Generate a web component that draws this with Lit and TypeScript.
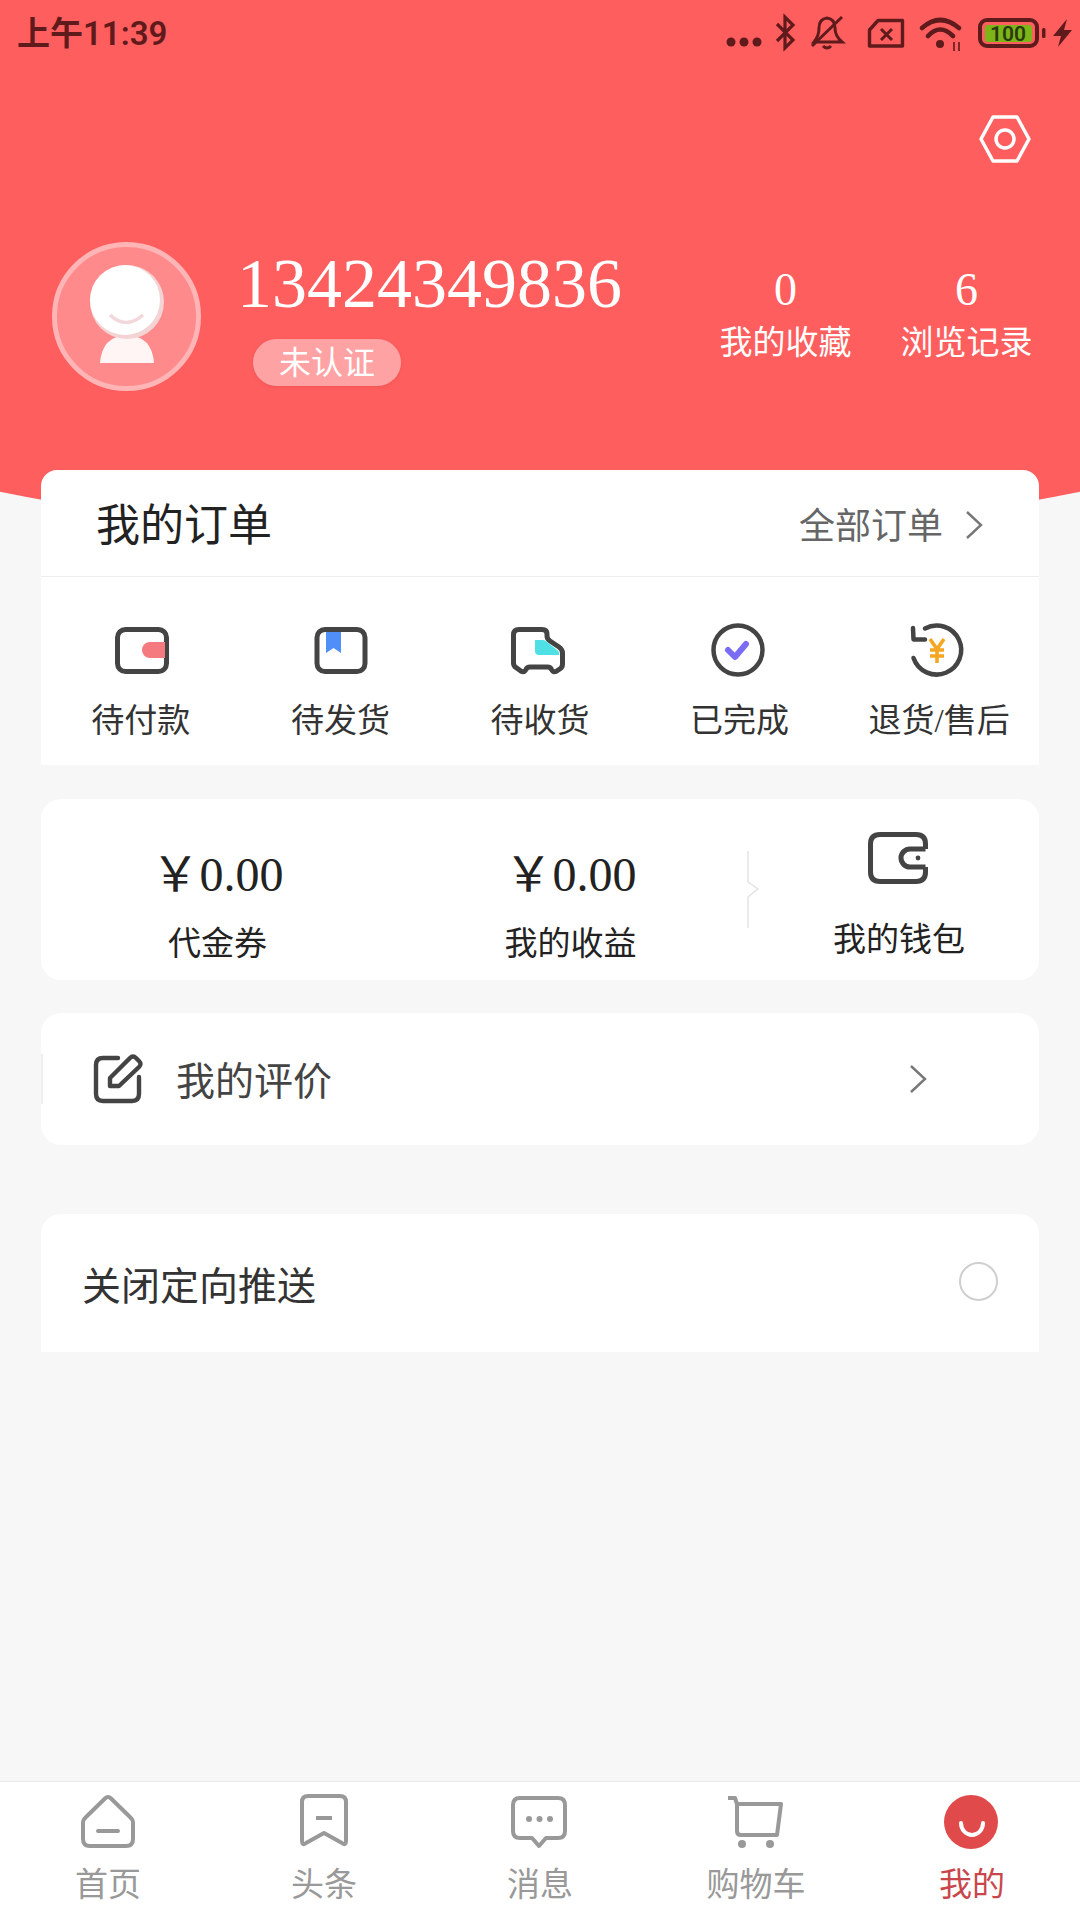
import { LitElement, html, css, svg } from "lit";
import { customElement } from "lit/decorators.js";

const chevron = (w: number, h: number, color: string) => html`<svg width=${w} height=${h} viewBox="0 0 18 30" fill="none" stroke=${color} stroke-width="2.4"><path d="M2 2 L16 15 L2 28" /></svg>`;

const orderIcons = [
  { label: "待付款", icon: svg`<rect x="6.5" y="9.5" width="49" height="42" rx="8" fill="none" stroke="#444" stroke-width="5"/><path d="M54 22 H39 A8 8 0 0 0 39 38 H54 Z" fill="#f47a7f"/>` },
  { label: "待发货", icon: svg`<path d="M16 10 H31 V33 L23.5 28 L16 33 Z" fill="#4f8ff7"/><rect x="7" y="9.5" width="48" height="42" rx="8" fill="none" stroke="#444" stroke-width="5"/>` },
  { label: "待收货", icon: svg`<path d="M9 9.5 H32 Q37 9.5 37 14 V16 Q37 19 40 21 L49 27 Q52.5 29.5 52.5 33 V44 Q52.5 47 50.5 48.5 L46 51.5 Q43 52.5 41.5 49.5 Q40.5 47 37.5 47 H20 Q17 47 16 49.5 Q14.5 52.5 11.5 51.5 L6 47.5 Q3.5 46 3.5 43 V15 Q3.5 9.5 9 9.5 Z" fill="none" stroke="#444" stroke-width="5" stroke-linejoin="round"/><path d="M25 20 H33 Q35 20 37 22 L47 30 Q49 31 49 33 V35 H29 Q25 35 25 31 Z" fill="#4fe0e6"/>` },
  { label: "已完成", icon: svg`<circle cx="28" cy="30" r="24.5" fill="none" stroke="#444" stroke-width="4.5"/><path d="M18 30 L25 37 L36 24" fill="none" stroke="#7b6cf5" stroke-width="6" stroke-linecap="round" stroke-linejoin="round"/>` },
  { label: "退货/售后", icon: svg`<path d="M16 8.5 A24.5 24.5 0 1 1 4.5 38" fill="none" stroke="#444" stroke-width="4.5" stroke-linecap="round"/><path d="M4 8 L4.5 19.5 L16 19.5" fill="none" stroke="#444" stroke-width="4.5" stroke-linecap="round" stroke-linejoin="round"/><path d="M21 19 L28 29 L35 19 M28 29 V43 M21 30 H35 M21 36 H35" fill="none" stroke="#f5a623" stroke-width="3.6"/>` },
];

const navItems = [
  { label: "首页", icon: svg`<path d="M27 6.5 Q30 3.5 33 6.5 L52 25 Q55 27.5 55 31 V47 Q55 54 48 54 H12 Q5 54 5 47 V31 Q5 27.5 8 25 Z M20 39 H40" fill="none" stroke="#999" stroke-width="4" stroke-linejoin="round" stroke-linecap="round"/>` },
  { label: "头条", icon: svg`<path d="M14 4 H46 Q52 4 52 10 V49 Q52 54 48 51 L30 41 L12 51 Q8 54 8 49 V10 Q8 4 14 4 Z M22 26 H38" fill="none" stroke="#999" stroke-width="4" stroke-linejoin="round"/>` },
  { label: "消息", icon: svg`<path d="M10 6 H48 Q55 6 55 13 V39 Q55 46 48 46 H36 L29 54 L22 46 H10 Q3 46 3 39 V13 Q3 6 10 6 Z" fill="none" stroke="#999" stroke-width="4" stroke-linejoin="round"/><circle cx="19" cy="27" r="3" fill="#999"/><circle cx="29.5" cy="27" r="3" fill="#999"/><circle cx="40" cy="27" r="3" fill="#999"/>` },
  { label: "购物车", icon: svg`<path d="M2 6 H9 L11 12 V39 Q11 43 15 43 H51 L55 12 H11" fill="none" stroke="#999" stroke-width="4" stroke-linejoin="round"/><circle cx="16" cy="52" r="4" fill="#999"/><circle cx="44" cy="52" r="4" fill="#999"/>` },
  { label: "我的", active: true, icon: svg`<circle cx="29" cy="30" r="27" fill="#e14a4a"/><path d="M19 31 A11 12 0 0 0 41 31" fill="none" stroke="#fff" stroke-width="4" stroke-linecap="round"/>` },
];

@customElement("app-root")
export class AppRoot extends LitElement {
  static styles = css`
    :host {
      display: flex;
      flex-direction: column;
      width: 1080px;
      height: 1920px;
      background: #f7f7f7;
      overflow: hidden;
      font-family: "Liberation Serif", "Noto Sans CJK SC", serif;
    }
    svg { display: block; flex: none; }
    .header {
      height: 544px;
      background: #ff5e5e;
      clip-path: ellipse(1262px 544px at 540px 0);
      display: flex;
      flex-direction: column;
      color: #fff;
    }
    .status {
      height: 66px;
      display: flex;
      align-items: center;
      justify-content: space-between;
      padding-left: 17px;
      color: #5f1a1c;
      font: 600 33px/66px Roboto, "Noto Sans CJK SC", sans-serif;
    }
    .status span { padding-top: 2px; }
    .settings { display: flex; justify-content: flex-end; padding-right: 49px; margin-top: 48px; }
    .profile { display: flex; margin-top: 78px; padding: 0 23px 0 52px; }
    .info { margin-left: 36px; }
    .phone { font-size: 70px; line-height: 84px; }
    .badge {
      margin: 13px 0 0 16px;
      width: 148px;
      height: 47px;
      border-radius: 24px;
      background: #ffa2a4;
      box-shadow: 0 1px 3px rgba(200, 60, 60, 0.3);
      font-size: 32px;
      line-height: 49px;
      text-align: center;
    }
    .stats { margin-left: auto; display: flex; padding-top: 18px; }
    .stat { width: 181px; text-align: center; }
    .stat b { display: block; font-weight: 400; font-size: 46px; line-height: 59px; }
    .stat span { display: block; font-size: 33px; line-height: 48px; }
    .content { flex: 1; margin: -74px 41px 0; display: flex; flex-direction: column; position: relative; }
    .card { background: #fff; border-radius: 20px; }
    .order { height: 295px; border-radius: 16px 16px 0 0; }
    .order-head {
      height: 106px;
      border-bottom: 1px solid #eeeeee;
      display: flex;
      align-items: center;
      padding: 0 56px 0 55px;
      color: #222;
      font-size: 44px;
    }
    .order-head > span { margin-top: -2px; }
    .all { margin-left: auto; display: flex; align-items: center; gap: 22px; color: #666; font-size: 36px; }
    .all svg { margin-top: 3px; }
    .order-grid { display: grid; grid-template-columns: repeat(5, 1fr); padding-top: 43px; }
    .order-item { display: flex; flex-direction: column; align-items: center; }
    .order-item span { margin-top: 17px; font-size: 33px; line-height: 48px; color: #333; white-space: nowrap; }
    .wallet { height: 181px; margin-top: 34px; display: flex; }
    .money { width: 353px; padding-top: 46px; text-align: center; box-sizing: border-box; color: #222; }
    .money b { display: block; font-weight: 400; font-size: 48px; line-height: 60px; }
    .money span { display: block; margin-top: 15px; font-size: 33px; line-height: 48px; }
    .wallet-sep { align-self: center; }
    .purse { flex: 1; display: flex; flex-direction: column; align-items: center; padding-top: 33px; color: #222; }
    .purse svg { margin-left: -2px; }
    .purse span { margin-top: 32px; font-size: 33px; line-height: 48px; }
    .review {
      height: 132px;
      margin-top: 33px;
      display: flex;
      align-items: center;
      padding-right: 112px;
      color: #444;
      font-size: 39px;
    }
    .tick { width: 2px; height: 50px; background: #eee; margin-right: 50px; }
    .review span { margin: -2px 0 0 33px; }
    .review svg:last-child { margin-left: auto; }
    .push {
      height: 138px;
      margin-top: 69px;
      border-radius: 20px 20px 0 0;
      display: flex;
      align-items: center;
      justify-content: space-between;
      padding: 0 41px;
      color: #333;
      font-size: 39px;
    }
    .radio { width: 39px; height: 39px; box-sizing: border-box; border: 2px solid #cfcfcf; border-radius: 50%; margin-top: -4px; }
    .nav {
      height: 139px;
      box-sizing: border-box;
      border-top: 1px solid #e8e8e8;
      background: #fff;
      display: grid;
      grid-template-columns: repeat(5, 1fr);
      padding-top: 10px;
    }
    .nav-item { display: flex; flex-direction: column; align-items: center; color: #999; }
    .nav-item.active { color: #c9474c; }
    .nav-item span { margin-top: 11px; font-size: 33px; line-height: 44px; }
  `;

  render() {
    return html`
      <div class="header">
        <div class="status">
          <span>上午11:39</span>
          <svg width="360" height="66" viewBox="0 0 360 66" fill="none" stroke="#5f1a1c">
            <g fill="#5f1a1c" stroke="none"><circle cx="11" cy="42" r="4.5"/><circle cx="24" cy="42" r="4.5"/><circle cx="37" cy="42" r="4.5"/></g>
            <path d="M57 24 L73 40 L65 48 V17 L73 25 L57 41" stroke-width="3.2"/>
            <path d="M94 42 H122 Q115 36 115 28 Q115 19 107 18 Q99 19 99 28 Q99 36 94 42 Z M103 46 Q107 50 111 46" stroke-width="3"/>
            <path d="M92 46 L122 17" stroke-width="3"/>
            <path d="M158 20.5 H182.5 V46 H149.5 V30 Z" stroke-width="3.4" stroke-linejoin="round"/>
            <path d="M161 29 L172 40 M172 29 L161 40" stroke-width="3"/>
            <path d="M202 28 Q220 12 239 28 M208 36 Q220 23 233 36" stroke-width="4.6" stroke-linecap="round"/>
            <circle cx="220" cy="44" r="4" fill="#5f1a1c" stroke="none"/>
            <path d="M234 42 V51 M239 42 V51" stroke-width="1.6"/>
            <rect x="265" y="25" width="47" height="17" rx="3" fill="#7cb518" stroke="none"/>
            <rect x="260" y="20" width="57" height="26" rx="7" stroke-width="4"/>
            <rect x="322" y="28" width="3.5" height="10" rx="1.5" fill="#5f1a1c" stroke="none"/>
            <text x="288" y="41" text-anchor="middle" font-family="Roboto" font-size="21" fill="#2a3a10" stroke="none">100</text>
            <path d="M347 19 L333 36 L341 36 L338 47 L352 30 L344 30 Z" fill="#5f1a1c" stroke="none"/>
          </svg>
        </div>
        <div class="settings">
          <svg width="52" height="50" viewBox="0 0 52 50" fill="none" stroke="#fff" stroke-width="3.5" stroke-linejoin="round">
            <path d="M14 3 H38 L50 25 L38 47 H14 L2 25 Z"/><circle cx="26" cy="25" r="9"/>
          </svg>
        </div>
        <div class="profile">
          <svg width="149" height="149" viewBox="0 0 149 149">
            <circle cx="74.5" cy="74.5" r="72" fill="#ff8a8c" stroke="#ffb4b5" stroke-width="5"/>
            <path d="M48 121 Q50 94 75 93 Q100 94 102 121 Z" fill="#fff5f5"/>
            <circle cx="75" cy="60" r="37" fill="#f3d3d3"/>
            <circle cx="73" cy="58" r="35" fill="#fff"/>
            <path d="M58 73 Q74 88 91 73" fill="none" stroke="#f2d8dc" stroke-width="3.5"/>
          </svg>
          <div class="info">
            <div class="phone">13424349836</div>
            <div class="badge">未认证</div>
          </div>
          <div class="stats">
            <div class="stat"><b>0</b><span>我的收藏</span></div>
            <div class="stat"><b>6</b><span>浏览记录</span></div>
          </div>
        </div>
      </div>
      <div class="content">
        <div class="card order">
          <div class="order-head">
            <span>我的订单</span>
            <div class="all"><span>全部订单</span>${chevron(18, 30, "#777")}</div>
          </div>
          <div class="order-grid">
            ${orderIcons.map((o) => html`<div class="order-item">
              <svg width="60" height="60" viewBox="0 0 60 60">${o.icon}</svg>
              <span>${o.label}</span>
            </div>`)}
          </div>
        </div>
        <div class="card wallet">
          <div class="money"><b>\uFFE50.00</b><span>代金券</span></div>
          <div class="money"><b>\uFFE50.00</b><span>我的收益</span></div>
          <svg class="wallet-sep" width="12" height="77" viewBox="0 0 12 77" fill="none" stroke="#e6e6e6" stroke-width="1.6"><path d="M1 0 V31 L11 38 L1 46 V77"/></svg>
          <div class="purse">
            <svg width="60" height="52" viewBox="0 0 60 52" fill="none" stroke="#444" stroke-width="5">
              <path d="M57.5 17 V12 Q57.5 2.5 48 2.5 H12 Q2.5 2.5 2.5 12 V40 Q2.5 49.5 12 49.5 H48 Q57.5 49.5 57.5 40 V35"/>
              <path d="M57.5 17 H42 A9 9 0 0 0 42 35 H57.5"/>
              <circle cx="50" cy="26" r="2.4" fill="#444" stroke="none"/>
            </svg>
            <span>我的钱包</span>
          </div>
        </div>
        <div class="card review">
          <div class="tick"></div>
          <svg width="50" height="50" viewBox="0 0 50 50" fill="none" stroke="#444" stroke-width="4.4" stroke-linecap="round" stroke-linejoin="round">
            <path d="M25 4 H10 Q3 4 3 11 V40 Q3 47 10 47 H39 Q46 47 46 40 V23"/>
            <path d="M17 32 V24 L37 4 Q40 1 43 4 L46 7 Q49 10 46 13 L26 32 Z"/>
          </svg>
          <span>我的评价</span>
          ${chevron(18, 30, "#777")}
        </div>
        <div class="card push">
          <span>关闭定向推送</span>
          <div class="radio"></div>
        </div>
      </div>
      <div class="nav">
        ${navItems.map((n) => html`<div class="nav-item ${n.active ? "active" : ""}">
          <svg width="60" height="60" viewBox="0 0 60 60">${n.icon}</svg>
          <span>${n.label}</span>
        </div>`)}
      </div>
    `;
  }
}
